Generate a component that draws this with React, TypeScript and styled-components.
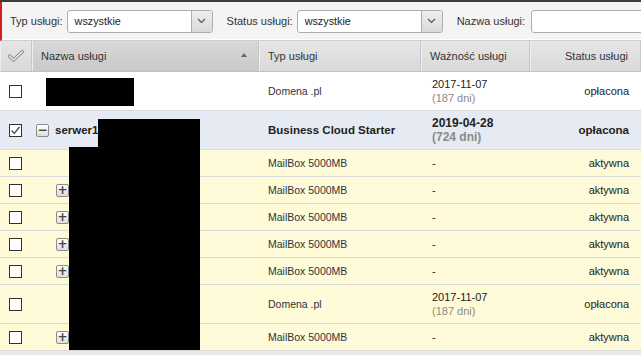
import styled, { createGlobalStyle } from "styled-components";

type Item = {
  kind: "domain" | "parent" | "mail";
  checked?: boolean;
  name?: string;
  type: string;
  date?: string;
  days?: string;
  status: string;
  tall?: boolean;
};

const rows: Item[] = [
  { kind: "domain", type: "Domena .pl", date: "2017-11-07", days: "(187 dni)", status: "opłacona", tall: true },
  { kind: "parent", checked: true, name: "serwer1", type: "Business Cloud Starter", date: "2019-04-28", days: "(724 dni)", status: "opłacona", tall: true },
  { kind: "mail", type: "MailBox 5000MB", status: "aktywna" },
  { kind: "mail", type: "MailBox 5000MB", status: "aktywna" },
  { kind: "mail", type: "MailBox 5000MB", status: "aktywna" },
  { kind: "mail", type: "MailBox 5000MB", status: "aktywna" },
  { kind: "mail", type: "MailBox 5000MB", status: "aktywna" },
  { kind: "domain", type: "Domena .pl", date: "2017-11-07", days: "(187 dni)", status: "opłacona", tall: true },
  { kind: "mail", type: "MailBox 5000MB", status: "aktywna" },
];

// which mail rows show the expand button
const plusRows = [3, 4, 5, 6, 8];

export default function App() {
  return (
    <Page>
      <GlobalStyle />
      <TopStrip />
      <FilterBar>
        <Label>Typ usługi:</Label>
        <Select $width={146}>
          <SelectValue>wszystkie</SelectValue>
          <DropButton>
            <Chevron />
          </DropButton>
        </Select>
        <Label>Status usługi:</Label>
        <Select $width={146}>
          <SelectValue>wszystkie</SelectValue>
          <DropButton>
            <Chevron />
          </DropButton>
        </Select>
        <Label>Nazwa usługi:</Label>
        <TextInput />
      </FilterBar>

      <HeaderRow>
        <HeadCell $center>
          <CheckAllIcon />
        </HeadCell>
        <HeadCell $sorted>
          Nazwa usługi
          <SortArrow />
        </HeadCell>
        <HeadCell>Typ usługi</HeadCell>
        <HeadCell>Ważność usługi</HeadCell>
        <HeadCell $right>Status usługi</HeadCell>
      </HeaderRow>

      {rows.map((r, i) => (
        <Row key={i} $tone={r.kind === "parent" ? "blue" : i === 0 ? "white" : "yellow"} $tall={!!r.tall}>
          <CheckCell>
            <Checkbox>{r.checked && <CheckMark />}</Checkbox>
          </CheckCell>
          <NameCell $indent={r.kind === "mail" ? 24 : 4}>
            {r.kind === "parent" && <ToggleBox>−</ToggleBox>}
            {plusRows.includes(i) && <ToggleBox>+</ToggleBox>}
            {r.name && <NameText>{r.name}</NameText>}
          </NameCell>
          <TypeCell $bold={r.kind === "parent"}>{r.type}</TypeCell>
          <DateCell $bold={r.kind === "parent"}>
            {r.date ? (
              <>
                <span>{r.date}</span>
                <Days>{r.days}</Days>
              </>
            ) : (
              <span>-</span>
            )}
          </DateCell>
          <StatusCell $bold={r.kind === "parent"}>{r.status}</StatusCell>
        </Row>
      ))}
      <Footer />

      <Redact style={{ left: 46, top: 78, width: 88, height: 28 }} />
      <Redact style={{ left: 98, top: 119, width: 102, height: 30 }} />
      <Redact style={{ left: 69, top: 147, width: 131, height: 203 }} />
    </Page>
  );
}

function Chevron() {
  return (
    <svg width="9" height="6" viewBox="0 0 9 6">
      <path d="M1 1 L4.5 4.5 L8 1" fill="none" stroke="#555" strokeWidth="1.2" />
    </svg>
  );
}

function CheckAllIcon() {
  return (
    <svg width="16" height="12" viewBox="0 0 16 12">
      <path d="M1.5 6 L5.5 10 L14.5 1.5" fill="none" stroke="#8a8a8a" strokeWidth="3.2" strokeLinejoin="round" strokeLinecap="round" />
      <path d="M1.5 6 L5.5 10 L14.5 1.5" fill="none" stroke="#f2f2f2" strokeWidth="1.4" strokeLinejoin="round" strokeLinecap="round" />
    </svg>
  );
}

function CheckMark() {
  return (
    <svg width="11" height="11" viewBox="0 0 11 11">
      <path d="M1.5 5.5 L4.3 8.3 L9.5 2" fill="none" stroke="#444" strokeWidth="1.3" />
    </svg>
  );
}

const GlobalStyle = createGlobalStyle`
  html, body {
    margin: 0;
    padding: 0;
    background: #e9e9e9;
    overflow: hidden;
  }
  body {
    font-family: "Liberation Sans", Arial, sans-serif;
    font-size: 11px;
    color: #333;
  }
`;

const Page = styled.div`
  position: relative;
  width: 641px;
  height: 355px;
  overflow: hidden;
  background: #e9e9e9;
`;

const TopStrip = styled.div`
  height: 2px;
  background: #3d3d3d;
`;

const FilterBar = styled.div`
  height: 38px;
  display: flex;
  align-items: center;
  gap: 4px;
  padding-left: 8px;
  border-left: 2px solid #d21f1f;
  background: #f4f4f4;
  border-bottom: 1px solid #cfcfcf;
  box-shadow: inset 0 -1px 0 #fff;
  white-space: nowrap;
`;

const Label = styled.span`
  font-size: 11px;
  color: #333;
  margin-left: 10px;

  &:first-child {
    margin-left: 0;
  }
`;

const Select = styled.div<{ $width: number }>`
  width: ${(p) => p.$width}px;
  height: 23px;
  box-sizing: border-box;
  display: flex;
  align-items: stretch;
  background: #fff;
  border: 1px solid #aeaeae;
  border-radius: 3px;
  flex-shrink: 0;
`;

const SelectValue = styled.span`
  flex: 1;
  display: flex;
  align-items: center;
  padding-left: 7px;
  font-size: 10.8px;
  color: #222;
`;

const DropButton = styled.span`
  width: 20px;
  display: flex;
  align-items: center;
  justify-content: center;
  background: linear-gradient(#eeeeee, #d9d9d9);
  border-left: 1px solid #aeaeae;
  border-radius: 0 2px 2px 0;
`;

const TextInput = styled.div`
  width: 130px;
  height: 23px;
  box-sizing: border-box;
  flex-shrink: 0;
  margin-left: 2px;
  background: #fff;
  border: 1px solid #aeaeae;
  border-radius: 3px 0 0 3px;
`;

const columns = "32px 227px 162px 109px 111px";

const HeaderRow = styled.div`
  display: grid;
  grid-template-columns: ${columns};
  height: 30px;
  background: linear-gradient(#e6e6e6, #d9d9d9);
  border-bottom: 1px solid #c2c2c2;
`;

const HeadCell = styled.div<{ $sorted?: boolean; $center?: boolean; $right?: boolean }>`
  position: relative;
  display: flex;
  align-items: center;
  justify-content: ${(p) => (p.$center ? "center" : p.$right ? "flex-end" : "flex-start")};
  padding: ${(p) => (p.$center ? "0" : p.$right ? "0 12px 0 0" : "0 0 0 9px")};
  font-size: 11px;
  color: #333;
  border-right: 1px solid #c6c6c6;
  box-shadow: inset 1px 0 0 #eeeeee;
  background: ${(p) => (p.$sorted ? "linear-gradient(#d8d8d8, #c9c9c9)" : "transparent")};
  white-space: nowrap;
`;

const SortArrow = styled.span`
  position: absolute;
  right: 11px;
  top: 12px;
  width: 0;
  height: 0;
  border-left: 3.5px solid transparent;
  border-right: 3.5px solid transparent;
  border-bottom: 4px solid #666;
`;

const tones = {
  white: "#ffffff",
  blue: "#e6eaf2",
  yellow: "#fffad7",
};

const Row = styled.div<{ $tone: keyof typeof tones; $tall: boolean }>`
  display: grid;
  grid-template-columns: ${columns};
  height: ${(p) => (p.$tall ? 38 : 26)}px;
  background: ${(p) => tones[p.$tone]};
  border-bottom: 1px solid #dcdcdc;
  font-size: 10.5px;
  color: #2e3340;
`;

const CheckCell = styled.div`
  display: flex;
  align-items: center;
  padding-left: 9px;
`;

const Checkbox = styled.span`
  width: 13px;
  height: 13px;
  box-sizing: border-box;
  border: 1px solid #333;
  background: #fff;
  display: flex;
  align-items: center;
  justify-content: center;
`;

const NameCell = styled.div<{ $indent: number }>`
  display: flex;
  align-items: center;
  gap: 6px;
  padding-left: ${(p) => p.$indent}px;
`;

const ToggleBox = styled.span`
  width: 13px;
  height: 13px;
  box-sizing: border-box;
  border: 1px solid #8c8c8c;
  border-radius: 2px;
  background: linear-gradient(#ffffff, #dcdcdc);
  display: flex;
  align-items: center;
  justify-content: center;
  font-family: "DejaVu Sans", sans-serif;
  font-weight: bold;
  font-size: 12px;
  line-height: 1;
  color: #444;
`;

const NameText = styled.span`
  font-weight: bold;
  font-size: 11.5px;
  color: #222;
`;

const TypeCell = styled.div<{ $bold?: boolean }>`
  display: flex;
  align-items: center;
  padding-left: 9px;
  font-weight: ${(p) => (p.$bold ? "bold" : "normal")};
  font-size: ${(p) => (p.$bold ? "11.5px" : "10.5px")};
  color: ${(p) => (p.$bold ? "#222" : "#2e3340")};
  white-space: nowrap;
`;

const DateCell = styled.div<{ $bold?: boolean }>`
  display: flex;
  flex-direction: column;
  justify-content: center;
  padding-left: 11px;
  font-weight: ${(p) => (p.$bold ? "bold" : "normal")};
  font-size: ${(p) => (p.$bold ? "12px" : "11px")};
  line-height: 14px;
  color: #222;
`;

const Days = styled.span`
  color: #8a8a8a;
`;

const StatusCell = styled.div<{ $bold?: boolean }>`
  display: flex;
  align-items: center;
  justify-content: flex-end;
  padding-right: 12px;
  font-weight: ${(p) => (p.$bold ? "bold" : "normal")};
  font-size: ${(p) => (p.$bold ? "11.5px" : "11px")};
  color: #222;
`;

const Footer = styled.div`
  height: 10px;
  background: #e9e9e9;
`;

const Redact = styled.div`
  position: absolute;
  background: #000;
`;
